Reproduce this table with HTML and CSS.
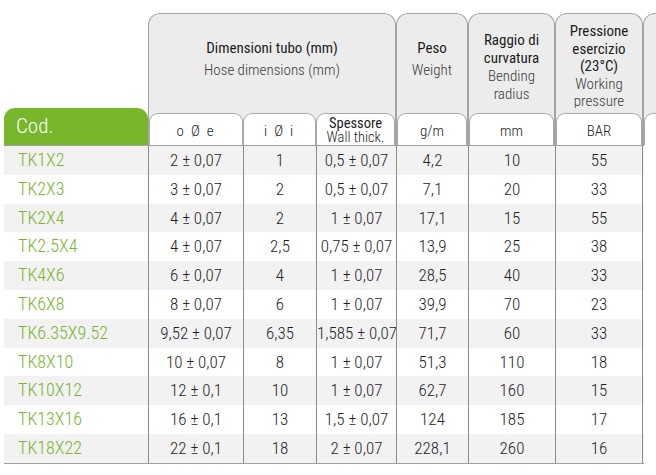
FILE: index.html
```html
<!DOCTYPE html>
<html lang="it">
<head>
<meta charset="utf-8">
<title>Tubi TK</title>
<link rel="stylesheet" href="styles.css">
</head>
<body>
<div class="sheet">
  <div class="head">
    <div class="codtab">Cod.</div>
    <div class="panel dims">
      <div class="label"><div class="txt two"><b>Dimensioni tubo (mm)</b><span>Hose dimensions (mm)</span></div></div>
      <div class="units">
        <div class="unit w1 spaced">o Ø e</div>
        <div class="unit w2 spaced">i Ø i</div>
        <div class="unit w3 stack"><b>Spessore</b><span>Wall thick.</span></div>
      </div>
    </div>
    <div class="panel peso">
      <div class="label"><div class="txt two"><b>Peso</b><span>Weight</span></div></div>
      <div class="units"><div class="unit full">g/m</div></div>
    </div>
    <div class="panel raggio">
      <div class="label"><div class="txt four"><b>Raggio di</b><b>curvatura</b><span>Bending</span><span>radius</span></div></div>
      <div class="units"><div class="unit full">mm</div></div>
    </div>
    <div class="panel press">
      <div class="label"><div class="txt five"><b>Pressione</b><b>esercizio</b><b>(23°C)</b><span>Working</span><span>pressure</span></div></div>
      <div class="units"><div class="unit full">BAR</div></div>
    </div>
    <div class="panel ghost">
      <div class="label"></div>
      <div class="units"><div class="unit full"></div></div>
    </div>
  </div>
  <div class="body">
    <div class="row"><div class="c code">TK1X2</div><div class="c">2 ± 0,07</div><div class="c">1</div><div class="c">0,5 ± 0,07</div><div class="c">4,2</div><div class="c">10</div><div class="c last">55</div></div>
    <div class="row"><div class="c code">TK2X3</div><div class="c">3 ± 0,07</div><div class="c">2</div><div class="c">0,5 ± 0,07</div><div class="c">7,1</div><div class="c">20</div><div class="c last">33</div></div>
    <div class="row"><div class="c code">TK2X4</div><div class="c">4 ± 0,07</div><div class="c">2</div><div class="c">1 ± 0,07</div><div class="c">17,1</div><div class="c">15</div><div class="c last">55</div></div>
    <div class="row"><div class="c code">TK2.5X4</div><div class="c">4 ± 0,07</div><div class="c">2,5</div><div class="c">0,75 ± 0,07</div><div class="c">13,9</div><div class="c">25</div><div class="c last">38</div></div>
    <div class="row"><div class="c code">TK4X6</div><div class="c">6 ± 0,07</div><div class="c">4</div><div class="c">1 ± 0,07</div><div class="c">28,5</div><div class="c">40</div><div class="c last">33</div></div>
    <div class="row"><div class="c code">TK6X8</div><div class="c">8 ± 0,07</div><div class="c">6</div><div class="c">1 ± 0,07</div><div class="c">39,9</div><div class="c">70</div><div class="c last">23</div></div>
    <div class="row"><div class="c code">TK6.35X9.52</div><div class="c">9,52 ± 0,07</div><div class="c">6,35</div><div class="c">1,585 ± 0,07</div><div class="c">71,7</div><div class="c">60</div><div class="c last">33</div></div>
    <div class="row"><div class="c code">TK8X10</div><div class="c">10 ± 0,07</div><div class="c">8</div><div class="c">1 ± 0,07</div><div class="c">51,3</div><div class="c">110</div><div class="c last">18</div></div>
    <div class="row"><div class="c code">TK10X12</div><div class="c">12 ± 0,1</div><div class="c">10</div><div class="c">1 ± 0,07</div><div class="c">62,7</div><div class="c">160</div><div class="c last">15</div></div>
    <div class="row"><div class="c code">TK13X16</div><div class="c">16 ± 0,1</div><div class="c">13</div><div class="c">1,5 ± 0,07</div><div class="c">124</div><div class="c">185</div><div class="c last">17</div></div>
    <div class="row"><div class="c code">TK18X22</div><div class="c">22 ± 0,1</div><div class="c">18</div><div class="c">2 ± 0,07</div><div class="c">228,1</div><div class="c">260</div><div class="c last">16</div></div>
  </div>
</div>
</body>
</html>
```

FILE: styles.css
```css
html, body {
  margin: 0;
  padding: 0;
  background: #ffffff;
  overflow: hidden;
}
body {
  font-family: Roboto, "Liberation Sans Narrow", "DejaVu Sans Condensed", sans-serif;
  font-stretch: 75%;
  color: #222;
  width: 656px;
  height: 475px;
}
.sheet {
  padding: 13px 0 0 4px;
  width: 652px;
  overflow: hidden;
}
.head {
  display: flex;
  align-items: flex-end;
  height: 132px;
}
.codtab {
  flex: none;
  width: 144px;
  height: 37px;
  box-sizing: border-box;
  background: #78b62c;
  color: #fff;
  border-radius: 11px 11px 0 0;
  font-size: 21px;
  font-weight: 300;
  padding: 6px 0 0 12px;
}
.panel {
  flex: none;
  height: 132px;
  box-sizing: border-box;
  background: #ececec;
  border: 1px solid #a4a4a4;
  border-bottom: none;
  border-radius: 12px 12px 0 0;
  display: flex;
  flex-direction: column;
}
.dims { width: 248px; }
.peso { width: 72px; }
.raggio { width: 87px; }
.press { width: 88px; }
.ghost { width: 40px; }
.label {
  height: 99px;
  display: flex;
  flex-direction: column;
}
.txt {
  height: 94px;
  overflow: hidden;
  display: flex;
  flex-direction: column;
  align-items: center;
  justify-content: center;
  text-align: center;
  font-size: 15px;
  box-sizing: border-box;
}
.txt b {
  font-weight: 380;
  color: #1c1c1c;
}
.txt span {
  font-weight: 300;
  color: #3a3a3a;
}
.two { line-height: 22px; padding-bottom: 4px; }
.four { line-height: 18px; justify-content: flex-start; padding-top: 17px; }
.five { line-height: 17.5px; justify-content: flex-start; padding-top: 9px; }
.units {
  display: flex;
  height: 32px;
}
.unit {
  box-sizing: border-box;
  height: 32px;
  background: #fff;
  border: 1px solid #a8a8a8;
  border-bottom: none;
  border-radius: 9px 9px 0 0;
  display: flex;
  flex-direction: column;
  align-items: center;
  justify-content: center;
  font-size: 15px;
  font-weight: 300;
  color: #222;
  padding-top: 3px;
}
.w1 { width: 94px; }
.w2 { width: 73px; }
.w3 { width: 79px; }
.full { flex: 1; }
.spaced { letter-spacing: 1.8px; }
.stack {
  line-height: 13.5px;
  font-size: 14.5px;
  padding-top: 2px;
}
.stack b { font-weight: 380; }
.body {
  width: 640px;
  border-top: 1px solid #a0a0a0;
  border-bottom: 1px solid #a0a0a0;
}
.row {
  display: grid;
  grid-template-columns: 144px 95px 73px 80px 72px 87px 88px;
  height: 28.8px;
}
.row:nth-child(odd) { background: #f2f2f2; }
.c {
  border-left: 1px solid #8c8c8c;
  text-align: center;
  font-size: 17px;
  font-weight: 300;
  line-height: 28.8px;
  white-space: nowrap;
  color: #1e1e1e;
}
.c.last { border-right: 1px solid #8c8c8c; }
.c.code {
  border-left: none;
  text-align: left;
  padding-left: 14px;
  color: #79b531;
  font-weight: 350;
  font-size: 18px;
}
```
